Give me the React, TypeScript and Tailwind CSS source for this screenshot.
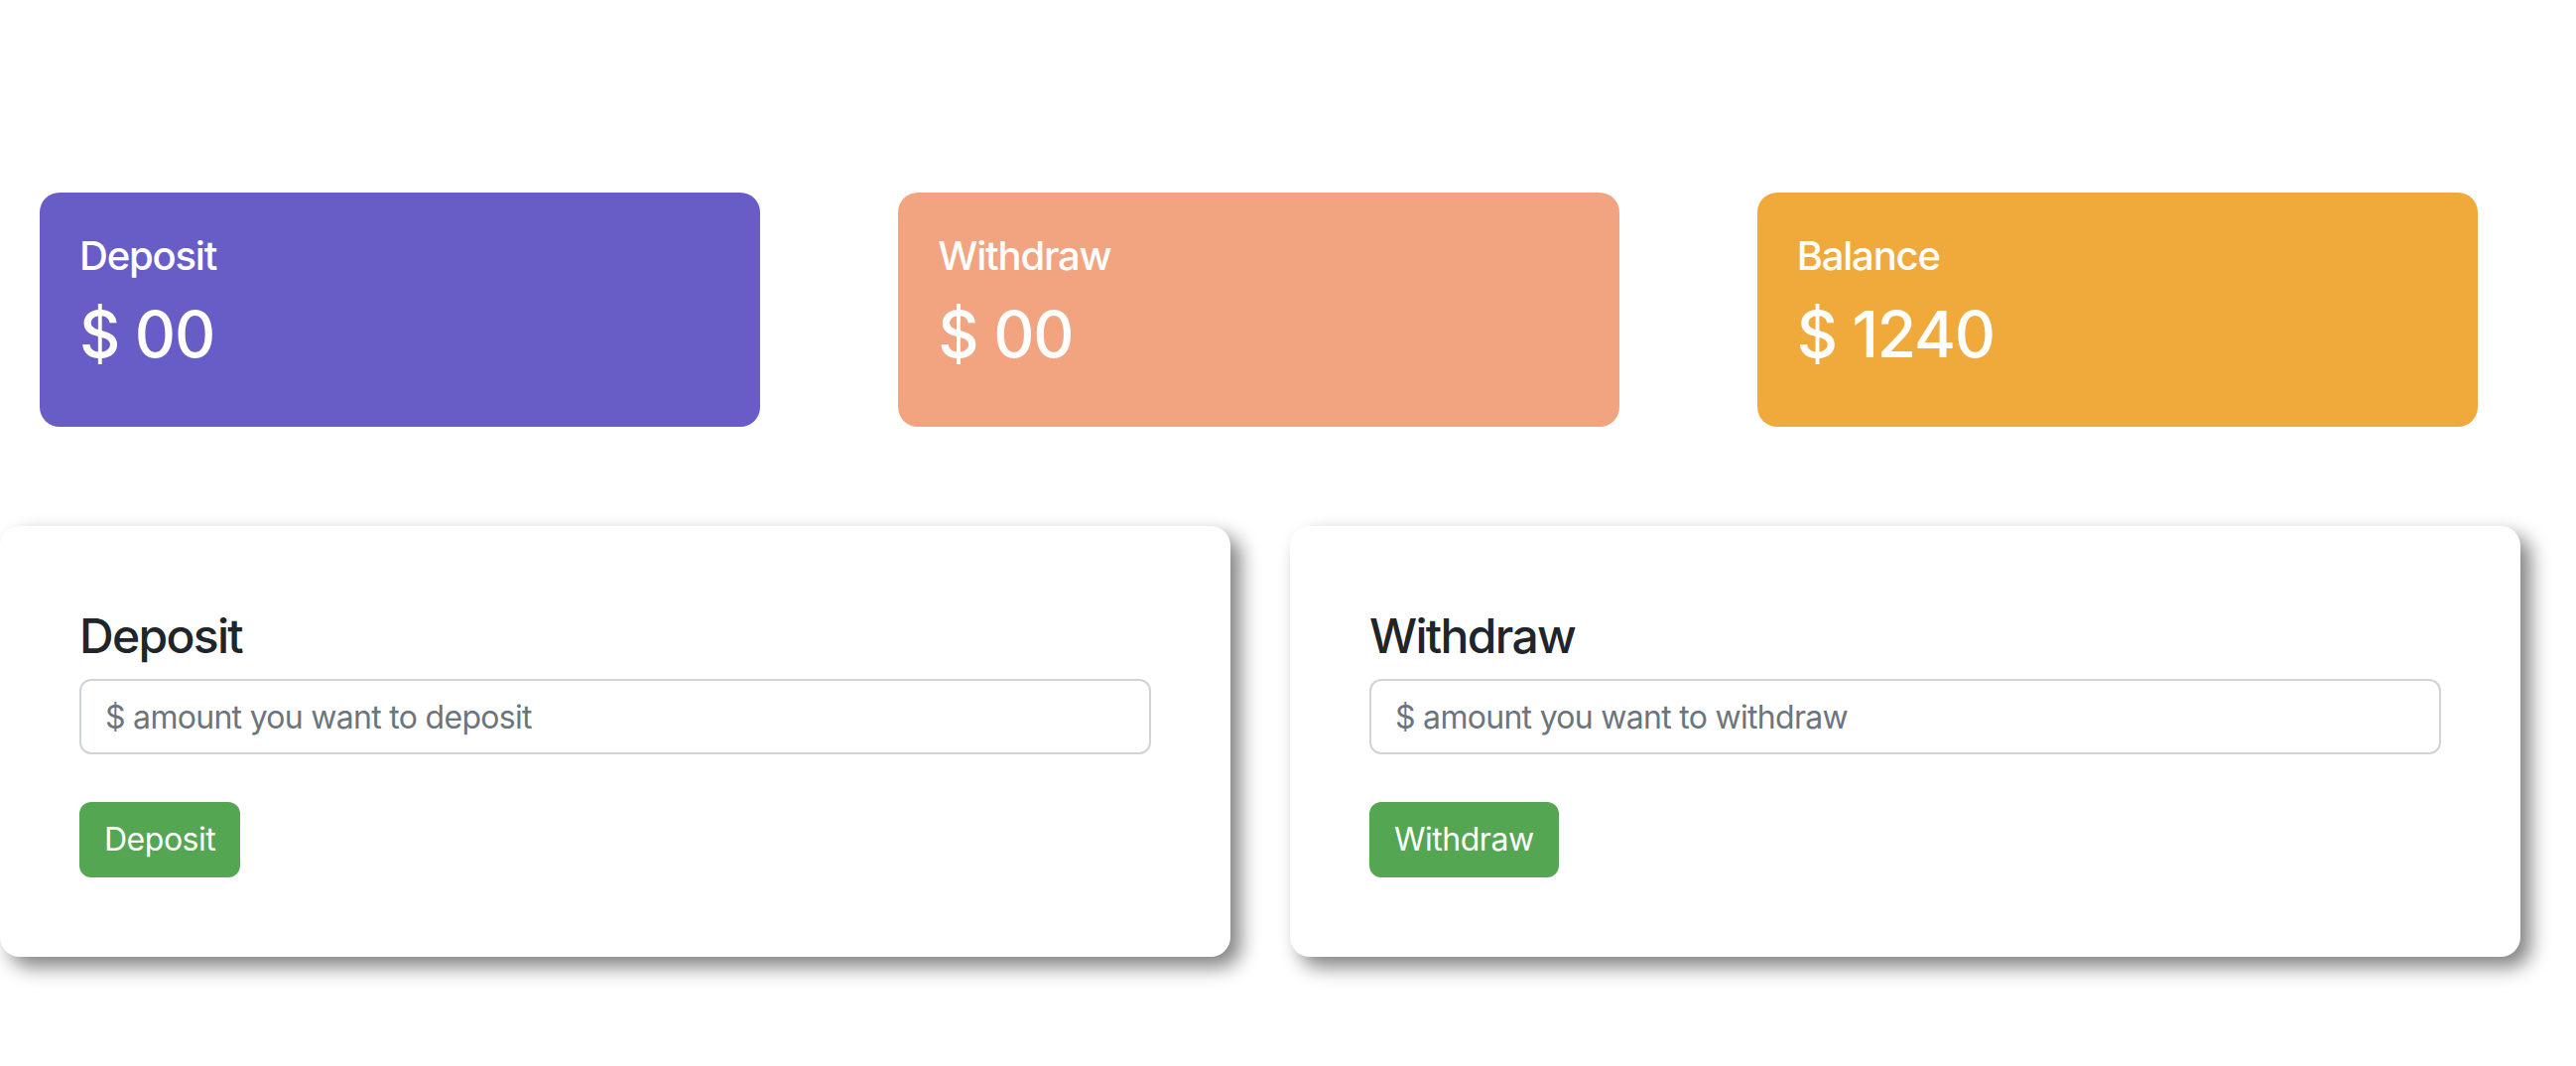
import React from "react";

const stats = [
  { label: "Deposit", value: "$ 00", bg: "bg-[#685dc6]" },
  { label: "Withdraw", value: "$ 00", bg: "bg-[#f1a47f]" },
  { label: "Balance", value: "$ 1240", bg: "bg-[#f0aa3c]" },
];

function StatCard({ label, value, bg }: { label: string; value: string; bg: string }) {
  return (
    <div className="pl-[40px] pr-[99px]">
      <div className={`${bg} rounded-[20px] px-[40px] pt-[40px] pb-[55px] text-white`}>
        <h5 className="text-[40px] leading-[48px] font-medium tracking-[-0.03em] mb-[16px]">{label}</h5>
        <h2 className="text-[64px] leading-[77px] font-medium tracking-[-0.02em]">{value}</h2>
      </div>
    </div>
  );
}

function ActionCard({ title, placeholder, button }: { title: string; placeholder: string; button: string }) {
  return (
    <div className="w-[1240px] bg-white rounded-[20px] shadow-[10px_10px_20px_#808080] px-[80px] pt-[82px] pb-[80px]">
      <h4 className="text-[48px] leading-[58px] font-medium tracking-[-0.035em] text-[#212529] mb-[14px]">{title}</h4>
      <input
        type="text"
        placeholder={placeholder}
        className="block w-full h-[76px] border-2 border-[#ced4da] rounded-[12px] px-[24px] text-[32px] tracking-[-0.022em] text-[#212529] placeholder:text-[#6c757d] outline-none bg-white"
      />
      <button className="mt-[48px] h-[76px] px-[25px] rounded-[12px] bg-[#54a653] text-white text-[32px] leading-[48px] tracking-[-0.015em]">
        {button}
      </button>
    </div>
  );
}

export default function App() {
  return (
    <div className="w-[2596px] min-h-[1074px] bg-white font-['Inter',sans-serif]">
      <div className="pt-[194px] grid grid-cols-3">
        {stats.map((s) => (
          <StatCard key={s.label} {...s} />
        ))}
      </div>
      <div className="mt-[100px] flex gap-[60px]">
        <ActionCard title="Deposit" placeholder="$ amount you want to deposit" button="Deposit" />
        <ActionCard title="Withdraw" placeholder="$ amount you want to withdraw" button="Withdraw" />
      </div>
    </div>
  );
}
